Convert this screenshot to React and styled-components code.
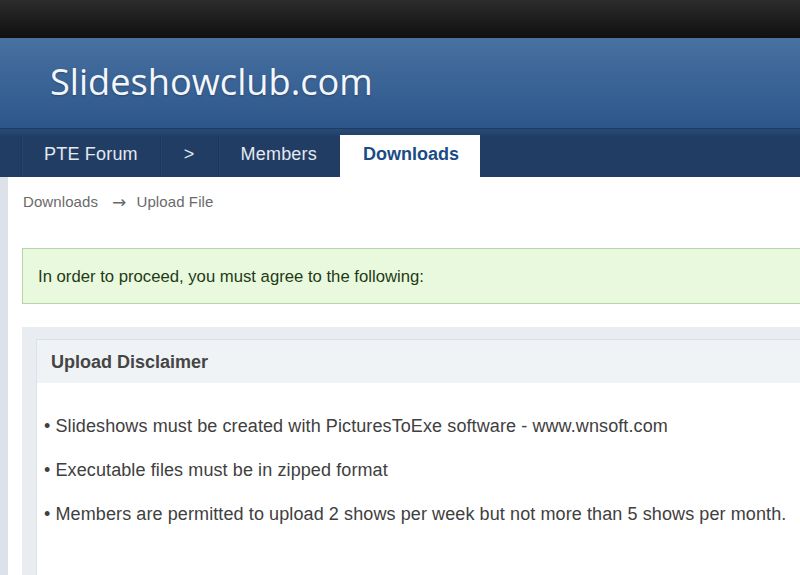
import React from "react";
import styled, { createGlobalStyle } from "styled-components";

const Global = createGlobalStyle`
  html, body { margin: 0; padding: 0; background: #ffffff; overflow: hidden; }
  body { font-family: "Liberation Sans", Arial, sans-serif; }
`;

const Page = styled.div`
  width: 800px;
  height: 575px;
  overflow: hidden;
  display: flex;
  flex-direction: column;
`;

const TopBar = styled.div`
  height: 38px;
  flex: none;
  background: linear-gradient(#2c2c2c, #1b1b1b 60%, #101010);
`;

const Header = styled.header`
  height: 90px;
  flex: none;
  box-sizing: border-box;
  padding: 19px 0 0 50px;
  background: linear-gradient(#4872a0, #3a6396 50%, #2d568b);
`;

const Logo = styled.div`
  font-family: "Open Sans", "Noto Sans", sans-serif;
  font-size: 36.2px;
  line-height: 49px;
  color: #f3f6fa;
  text-shadow: 0 1px 2px rgba(0, 0, 0, 0.25);
`;

const Nav = styled.nav`
  height: 49px;
  flex: none;
  box-sizing: border-box;
  padding: 6px 0 0 21px;
  display: flex;
  align-items: stretch;
  background: linear-gradient(#284a77 0px, #23426b 6px, #213d64 7px, #213d64);
  border-top: 1px solid #1f3a60;
`;

const NavItem = styled.div`
  display: flex;
  align-items: center;
  padding: 0 ${(p) => p.$right ?? 22}px 3px ${(p) => p.$left ?? 22}px;
  font-size: 18px;
  letter-spacing: ${(p) => (p.$active ? 0 : 0.2)}px;
  color: ${(p) => (p.$active ? "#1b4b84" : "#e4e9f0")};
  font-weight: ${(p) => (p.$active ? 700 : 400)};
  background: ${(p) => (p.$active ? "#ffffff" : "transparent")};
  border-left: 1px solid ${(p) => (p.$active ? "transparent" : "#1d375a")};
  box-shadow: ${(p) => (p.$active ? "none" : "inset 1px 0 0 #254469")};
  white-space: nowrap;
`;

const Main = styled.div`
  flex: 1;
  display: flex;
`;

const SideStrip = styled.div`
  width: 8px;
  flex: none;
  background: #dde2ea;
`;

const Content = styled.div`
  flex: 1;
  padding-left: 14px;
  margin-right: -20px;
`;

const Breadcrumb = styled.div`
  padding: 15px 0 0 1px;
  font-size: 15px;
  line-height: 20px;
  color: #6a6a6a;
  display: flex;
  align-items: center;
  letter-spacing: 0.1px;
`;

const Arrow = styled.span`
  font-family: "DejaVu Sans", sans-serif;
  font-size: 17px;
  line-height: 20px;
  margin: 0 10px 0 14px;
`;

const Notice = styled.div`
  margin-top: 36px;
  height: 56px;
  box-sizing: border-box;
  display: flex;
  align-items: center;
  padding: 2px 0 0 15px;
  background: #e9f9de;
  border: 1px solid #b7d3a8;
  font-size: 16.7px;
  color: #1f3a16;
`;

const Panel = styled.div`
  margin-top: 23px;
  background: #e9edf1;
  padding: 12px 0 0 14px;
  height: 260px;
`;

const Block = styled.div`
  background: #ffffff;
  border-left: 1px solid #dde3e9;
  border-top: 1px solid #d9e0e6;
  height: 100%;
`;

const BlockHead = styled.div`
  height: 43px;
  display: flex;
  align-items: center;
  padding: 1px 0 0 14px;
  box-sizing: border-box;
  background: #eff3f6;
  font-size: 18px;
  font-weight: 700;
  color: #454545;
`;

const BlockBody = styled.div`
  padding: 31px 0 0 7px;
  display: flex;
  flex-direction: column;
  gap: 20px;
`;

const Rule = styled.div`
  font-size: 18px;
  line-height: 24px;
  color: #404040;
  letter-spacing: 0.1px;
  white-space: nowrap;
`;

const rules = [
  "Slideshows must be created with PicturesToExe software - www.wnsoft.com",
  "Executable files must be in zipped format",
  "Members are permitted to upload 2 shows per week but not more than 5 shows per month.",
];

export default function App() {
  return (
    <Page>
      <Global />
      <TopBar />
      <Header>
        <Logo>Slideshowclub.com</Logo>
      </Header>
      <Nav>
        <NavItem>PTE Forum</NavItem>
        <NavItem $left={23} $right={23}>&gt;</NavItem>
        <NavItem $right={23}>Members</NavItem>
        <NavItem $active $left={22} $right={21}>Downloads</NavItem>
      </Nav>
      <Main>
        <SideStrip />
        <Content>
          <Breadcrumb>
            <span>Downloads</span>
            <Arrow>→</Arrow>
            <span>Upload File</span>
          </Breadcrumb>
          <Notice>In order to proceed, you must agree to the following:</Notice>
          <Panel>
            <Block>
              <BlockHead>Upload Disclaimer</BlockHead>
              <BlockBody>
                {rules.map((r) => (
                  <Rule key={r}>• {r}</Rule>
                ))}
              </BlockBody>
            </Block>
          </Panel>
        </Content>
      </Main>
    </Page>
  );
}
